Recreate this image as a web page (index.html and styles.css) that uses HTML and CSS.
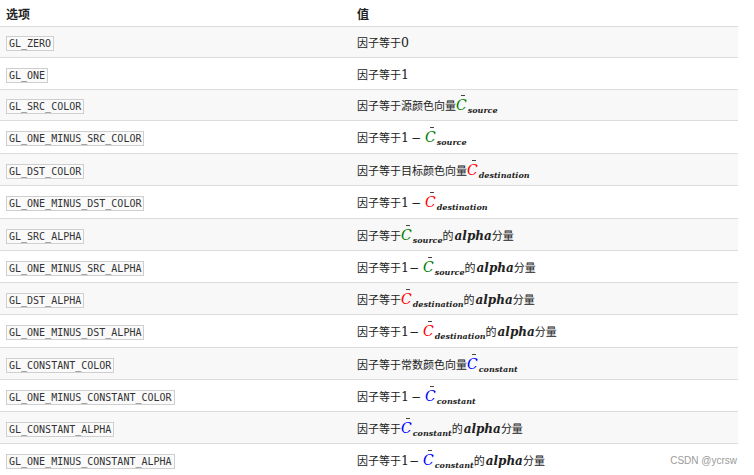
FILE: index.html
```html
<!DOCTYPE html>
<html lang="zh">
<head>
<meta charset="utf-8">
<link rel="stylesheet" href="styles.css">
</head>
<body>
<div class="page">
  <div class="tbl">
    <div class="head">
      <div class="c1">选项</div>
      <div class="c2">值</div>
    </div>
    <div class="row alt h31"><div class="c1"><code>GL_ZERO</code></div><div class="c2">因子等于<span class="num">0</span></div></div>
    <div class="row h32"><div class="c1"><code>GL_ONE</code></div><div class="c2">因子等于<span class="num">1</span></div></div>
    <div class="row alt h31"><div class="c1"><code>GL_SRC_COLOR</code></div><div class="c2">因子等于源颜色向量<span class="mc g">C</span><span class="sub">source</span></div></div>
    <div class="row h33"><div class="c1"><code>GL_ONE_MINUS_SRC_COLOR</code></div><div class="c2">因子等于<span class="num">1</span><span class="minus sp">−</span><span class="mc g">C</span><span class="sub">source</span></div></div>
    <div class="row alt h32"><div class="c1"><code>GL_DST_COLOR</code></div><div class="c2">因子等于目标颜色向量<span class="mc r">C</span><span class="sub">destination</span></div></div>
    <div class="row h33"><div class="c1"><code>GL_ONE_MINUS_DST_COLOR</code></div><div class="c2">因子等于<span class="num">1</span><span class="minus sp">−</span><span class="mc r">C</span><span class="sub">destination</span></div></div>
    <div class="row alt h32"><div class="c1"><code>GL_SRC_ALPHA</code></div><div class="c2">因子等于<span class="mc g">C</span><span class="sub">source</span>的<span class="alpha">alpha</span>分量</div></div>
    <div class="row h32"><div class="c1"><code>GL_ONE_MINUS_SRC_ALPHA</code></div><div class="c2">因子等于<span class="num">1</span><span class="minus">−</span><span class="mc g">C</span><span class="sub">source</span>的<span class="alpha">alpha</span>分量</div></div>
    <div class="row alt h32"><div class="c1"><code>GL_DST_ALPHA</code></div><div class="c2">因子等于<span class="mc r">C</span><span class="sub">destination</span>的<span class="alpha">alpha</span>分量</div></div>
    <div class="row h33"><div class="c1"><code>GL_ONE_MINUS_DST_ALPHA</code></div><div class="c2">因子等于<span class="num">1</span><span class="minus">−</span><span class="mc r">C</span><span class="sub">destination</span>的<span class="alpha">alpha</span>分量</div></div>
    <div class="row alt h32"><div class="c1"><code>GL_CONSTANT_COLOR</code></div><div class="c2">因子等于常数颜色向量<span class="mc b">C</span><span class="sub">constant</span></div></div>
    <div class="row h32"><div class="c1"><code>GL_ONE_MINUS_CONSTANT_COLOR</code></div><div class="c2">因子等于<span class="num">1</span><span class="minus sp">−</span><span class="mc b">C</span><span class="sub">constant</span></div></div>
    <div class="row alt h32"><div class="c1"><code>GL_CONSTANT_ALPHA</code></div><div class="c2">因子等于<span class="mc b">C</span><span class="sub">constant</span>的<span class="alpha">alpha</span>分量</div></div>
    <div class="row last"><div class="c1"><code>GL_ONE_MINUS_CONSTANT_ALPHA</code></div><div class="c2">因子等于<span class="num">1</span><span class="minus">−</span><span class="mc b">C</span><span class="sub">constant</span>的<span class="alpha">alpha</span>分量</div></div>
  </div>
  <div class="wm">CSDN @ycrsw</div>
</div>
</body>
</html>
```
FILE: styles.css
```css
html, body {
  margin: 0;
  padding: 0;
  background: #fff;
}
.page {
  position: relative;
  width: 754px;
  height: 475px;
  overflow: hidden;
  font-family: "Noto Sans CJK SC", "Noto Sans", sans-serif;
  color: #222;
  font-size: 11px;
}
.tbl {
  width: 738px;
}
.head {
  display: flex;
  align-items: center;
  height: 26px;
  font-weight: bold;
  font-size: 12px;
  color: #222;
}
.row {
  display: flex;
  align-items: center;
  box-sizing: border-box;
  border-top: 1px solid #dcdcdc;
  height: 32px;
}
.row.alt { background: #f8f8f8; }
.h31 { height: 31px; }
.h32 { height: 32px; }
.h33 { height: 33px; }
.last { height: 32px; }
.c1 {
  width: 351px;
  padding-left: 6px;
  box-sizing: border-box;
  flex: none;
}
.c2 {
  padding-left: 6px;
  white-space: nowrap;
}
code {
  font-family: "DejaVu Sans Mono", monospace;
  font-size: 10px;
  padding: 1px 2px;
  border: 1px solid #cfcfcf;
  background: #fafafa;
  color: #333;
}
.num {
  font-family: "DejaVu Serif", serif;
  font-size: 12.5px;
}
.minus {
  font-family: "DejaVu Serif", serif;
  font-size: 12px;
  margin-right: 4px;
}
.minus.sp { margin-left: 2px; }
.mc {
  position: relative;
  display: inline-block;
  font-family: "DejaVu Serif", serif;
  font-style: italic;
  font-size: 14px;
  line-height: 14px;
}
.mc::before {
  content: "";
  position: absolute;
  left: 5px;
  top: -3px;
  width: 4px;
  height: 1px;
  background: #444;
}
.g { color: #008000; }
.r { color: #ff0000; }
.b { color: #0000ff; }
.sub {
  font-family: "DejaVu Serif", serif;
  font-style: italic;
  font-weight: 600;
  font-size: 8px;
  position: relative;
  top: 3px;
  color: #222;
  margin-left: 1px;
}
.alpha {
  font-family: "DejaVu Serif", serif;
  font-style: italic;
  font-weight: bold;
  font-size: 12px;
  margin-left: 1px;
}
.wm {
  position: absolute;
  right: 17px;
  bottom: 9px;
  font-family: "Liberation Sans", Arial, sans-serif;
  font-size: 10px;
  color: #9a9a9a;
}
```
